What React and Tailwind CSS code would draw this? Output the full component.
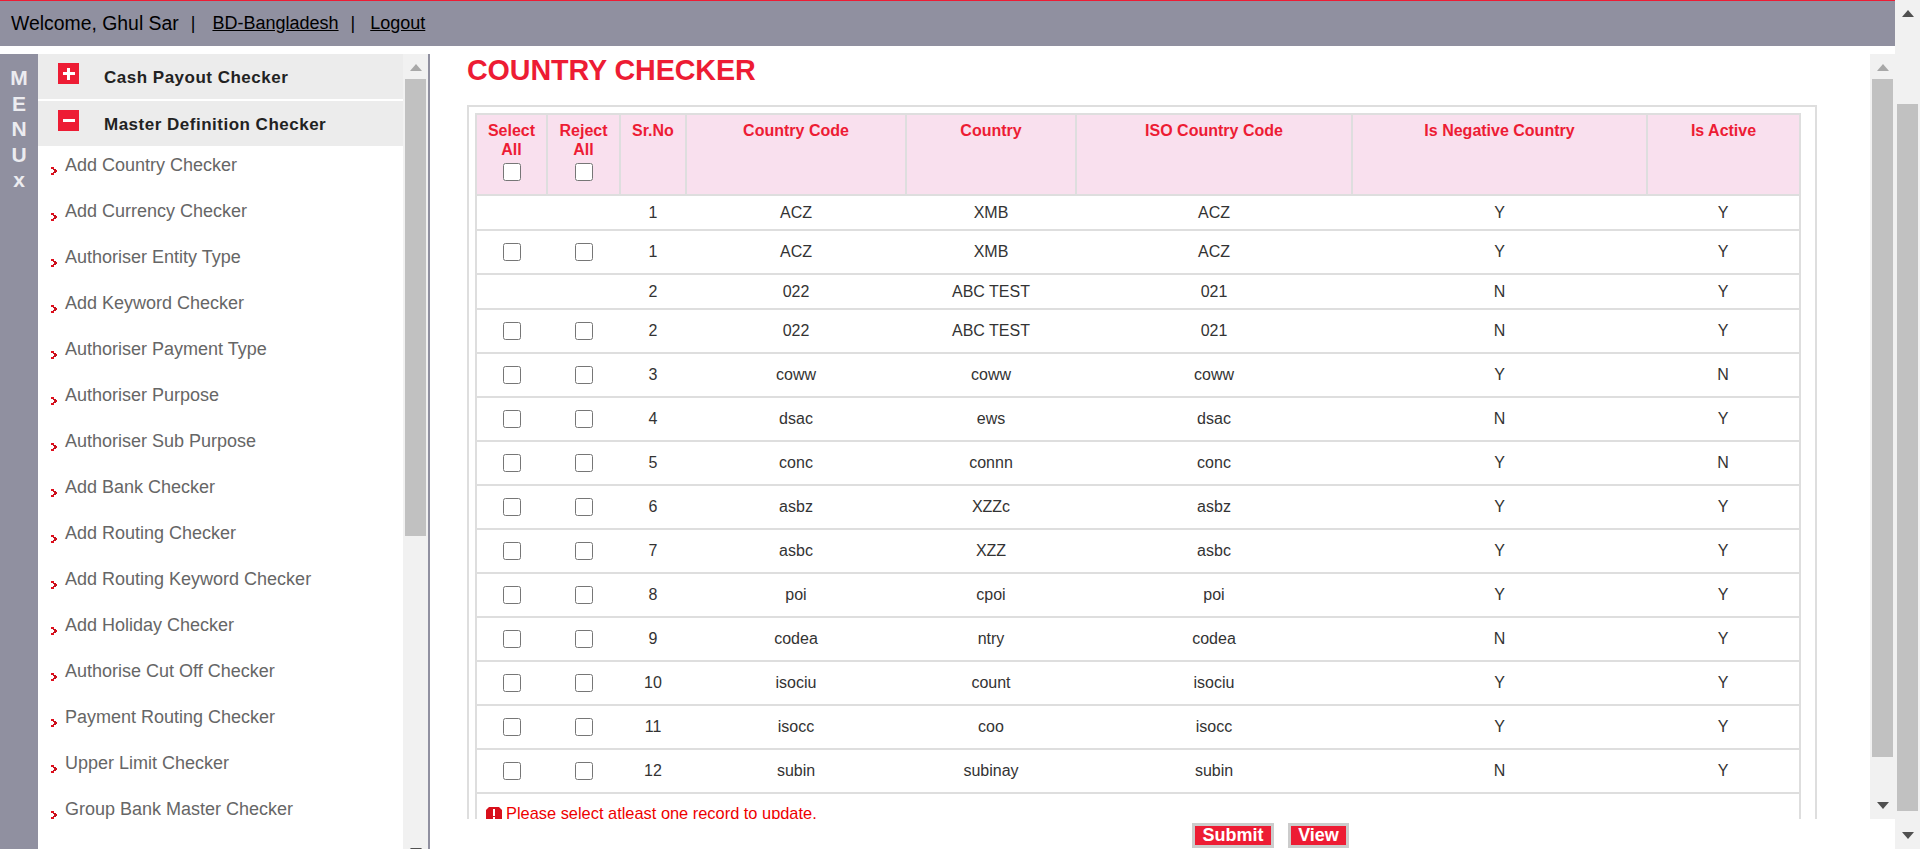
import React from "react";

const menuItems = [
  "Add Country Checker",
  "Add Currency Checker",
  "Authoriser Entity Type",
  "Add Keyword Checker",
  "Authoriser Payment Type",
  "Authoriser Purpose",
  "Authoriser Sub Purpose",
  "Add Bank Checker",
  "Add Routing Checker",
  "Add Routing Keyword Checker",
  "Add Holiday Checker",
  "Authorise Cut Off Checker",
  "Payment Routing Checker",
  "Upper Limit Checker",
  "Group Bank Master Checker",
];

const rows = [
  { sr: 1, code: "ACZ", country: "XMB", iso: "ACZ", neg: "Y", active: "Y", plain: true },
  { sr: 1, code: "ACZ", country: "XMB", iso: "ACZ", neg: "Y", active: "Y" },
  { sr: 2, code: "022", country: "ABC TEST", iso: "021", neg: "N", active: "Y", plain: true },
  { sr: 2, code: "022", country: "ABC TEST", iso: "021", neg: "N", active: "Y" },
  { sr: 3, code: "coww", country: "coww", iso: "coww", neg: "Y", active: "N" },
  { sr: 4, code: "dsac", country: "ews", iso: "dsac", neg: "N", active: "Y" },
  { sr: 5, code: "conc", country: "connn", iso: "conc", neg: "Y", active: "N" },
  { sr: 6, code: "asbz", country: "XZZc", iso: "asbz", neg: "Y", active: "Y" },
  { sr: 7, code: "asbc", country: "XZZ", iso: "asbc", neg: "Y", active: "Y" },
  { sr: 8, code: "poi", country: "cpoi", iso: "poi", neg: "Y", active: "Y" },
  { sr: 9, code: "codea", country: "ntry", iso: "codea", neg: "N", active: "Y" },
  { sr: 10, code: "isociu", country: "count", iso: "isociu", neg: "Y", active: "Y" },
  { sr: 11, code: "isocc", country: "coo", iso: "isocc", neg: "Y", active: "Y" },
  { sr: 12, code: "subin", country: "subinay", iso: "subin", neg: "N", active: "Y" },
];

const Arrow = ({ down, color }) => (
  <svg width="12" height="7" viewBox="0 0 12 7" className="block">
    <path d={down ? "M0 0h12L6 7z" : "M0 7h12L6 0z"} fill={color} />
  </svg>
);

const Bullet = () => (
  <svg width="6" height="8" viewBox="0 0 6 8" className="shrink-0 mt-[14px]" shapeRendering="crispEdges">
    <path d="M0 0h3v2H0zM0 6h3v2H0z" fill="#e0101e" />
    <path d="M2 2h3v1H2zM2 5h3v1H2z" fill="#c00f1a" />
    <path d="M3 3h3v2H3z" fill="#d0101c" />
  </svg>
);

const Toggle = ({ minus }) => (
  <div className="w-[21px] h-[21px] bg-[#ed1c34] flex items-center justify-center shrink-0 relative">
    <div className="w-[12px] h-[3px] bg-white" />
    {!minus && <div className="absolute w-[3px] h-[12px] bg-white" />}
  </div>
);

const Scrollbar = ({ thumbTop, thumbHeight, upColor, className }) => (
  <div className={`bg-[#f1f1f1] flex flex-col items-center relative ${className}`}>
    <div className="absolute top-[10px]">
      <Arrow color={upColor} />
    </div>
    <div
      className="absolute left-[2px] right-[2px] bg-[#c1c1c1]"
      style={{ top: thumbTop, height: thumbHeight }}
    />
    <div className="absolute bottom-[10px]">
      <Arrow down color="#505050" />
    </div>
  </div>
);

const Check = () => <input type="checkbox" className="block w-[18px] h-[18px] mx-auto" readOnly />;

const Sidebar = () => (
  <aside className="w-[430px] shrink-0 flex border-r-2 border-[#9090a0] overflow-hidden">
    <div className="w-[38px] shrink-0 bg-[#9090a0] flex flex-col items-center pt-[11px] font-bold text-[21px] leading-[25.5px] text-[#ececf0]">
      <span>M</span>
      <span>E</span>
      <span>N</span>
      <span>U</span>
      <span>x</span>
    </div>
    <div className="w-[365px] shrink-0 overflow-hidden">
      <div className="h-[45px] bg-[#ececec] mb-[2px] flex pl-[20px] pt-[9px]">
        <Toggle />
        <span className="ml-[25px] mt-[2px] font-bold text-[17px] tracking-[0.5px] leading-[26px] text-[#222]">
          Cash Payout Checker
        </span>
      </div>
      <div className="h-[45px] bg-[#ececec] flex pl-[20px] pt-[9px]">
        <Toggle minus />
        <span className="ml-[25px] mt-[2px] font-bold text-[17px] tracking-[0.5px] leading-[26px] text-[#222]">
          Master Definition Checker
        </span>
      </div>
      <ul>
        {menuItems.map((item) => (
          <li key={item} className="h-[46px] flex pl-[13px] pt-[7px] gap-[8px] text-[18px] leading-[26px] text-[#666]">
            <Bullet />
            <span className="-mt-[1px]">{item}</span>
          </li>
        ))}
      </ul>
    </div>
    <Scrollbar thumbTop={25} thumbHeight={457} upColor="#a8a8a8" className="w-[25px] h-[811px] shrink-0" />
  </aside>
);

const headers = [
  { label: "Select All", check: true, width: "w-[71px]" },
  { label: "Reject All", check: true, width: "w-[73px]" },
  { label: "Sr.No", width: "w-[66px]" },
  { label: "Country Code", width: "w-[220px]" },
  { label: "Country", width: "w-[170px]" },
  { label: "ISO Country Code", width: "w-[276px]" },
  { label: "Is Negative Country", width: "w-[295px]" },
  { label: "Is Active", width: "w-[153px]" },
];

const CountryTable = () => (
  <table className="table-fixed border-collapse w-[1324px] text-center text-[16px] text-[#333]">
    <thead>
      <tr>
        {headers.map((h) => (
          <th
            key={h.label}
            className={`${h.width} h-[81px] align-top bg-[#f9e0ee] border-2 border-[#dedede] pt-[6px] px-[8px] font-bold text-[#ed1c34] leading-[19px]`}
          >
            <div>{h.label}</div>
            {h.check && (
              <div className="mt-[4px] leading-[18px]">
                <Check />
              </div>
            )}
          </th>
        ))}
      </tr>
    </thead>
    <tbody>
      {rows.map((r, i) => (
        <tr key={i} className={r.plain ? "h-[35px]" : "h-[44px]"}>
          <td className="border-y-2 border-l-2 border-[#dedede]">{!r.plain && <Check />}</td>
          <td className="border-y-2 border-[#dedede]">{!r.plain && <Check />}</td>
          <td className="border-y-2 border-[#dedede]">{r.sr}</td>
          <td className="border-y-2 border-[#dedede]">{r.code}</td>
          <td className="border-y-2 border-[#dedede]">{r.country}</td>
          <td className="border-y-2 border-[#dedede]">{r.iso}</td>
          <td className="border-y-2 border-[#dedede]">{r.neg}</td>
          <td className="border-y-2 border-r-2 border-[#dedede]">{r.active}</td>
        </tr>
      ))}
      <tr>
        <td colSpan={8} className="border-x-2 border-t-2 border-[#dedede] h-[60px] align-top text-left pl-[9px] pt-[9px]">
          <div className="flex items-start gap-[4px] text-[16.4px] text-[#ee0000] leading-[20px]">
            <svg width="16" height="16" viewBox="0 0 16 16" className="mt-[3px] shrink-0">
              <path d="M3 1h10l3 3v9l-3 3H3l-3-3V4z" fill="#d8101c" />
              <path d="M7 3h2v7H7zM7 11h2v2H7z" fill="#fff" />
            </svg>
            <span>Please select atleast one record to update.</span>
          </div>
        </td>
      </tr>
    </tbody>
  </table>
);

const App = () => (
  <div className="h-screen flex overflow-hidden bg-white font-['Liberation_Sans',Arial,sans-serif]">
    <div className="flex-1 min-w-0 flex flex-col">
      <header className="h-[46px] shrink-0 bg-[#9090a0] border-t border-[#ed1c34] flex items-center pl-[11px] text-[18px] text-black">
        <span className="text-[19.4px]">Welcome, Ghul Sar</span>
        <span className="ml-[12px]">|</span>
        <a className="ml-[17px] underline">BD-Bangladesh</a>
        <span className="ml-[12px]">|</span>
        <a className="ml-[15px] underline">Logout</a>
      </header>
      <div className="flex-1 min-h-0 flex mt-[8px]">
        <Sidebar />
        <main className="flex-1 min-w-0 flex flex-col">
          <div className="h-[765px] shrink-0 flex overflow-hidden">
            <div className="flex-1 min-w-0 pl-[37px] overflow-hidden">
              <h1 className="text-[28.7px] font-bold leading-[32px] text-[#ed1c34] tracking-[-0.1px]">COUNTRY CHECKER</h1>
              <div className="w-[1350px] mt-[19px] border-2 border-b-0 border-[#dedede] pl-[6px] pt-[6px]">
                <CountryTable />
              </div>
            </div>
            <Scrollbar thumbTop={25} thumbHeight={678} upColor="#a8a8a8" className="w-[25px] shrink-0" />
          </div>
          <div className="flex-1 flex items-start justify-start pl-[762px] pt-[4px] gap-[14px]">
            <button className="w-[82px] h-[25px] bg-[#ed1c34] border-[3px] border-[#cccccc] text-white font-bold text-[18px] leading-[19px]">
              Submit
            </button>
            <button className="w-[61px] h-[25px] bg-[#ed1c34] border-[3px] border-[#cccccc] text-white font-bold text-[18px] leading-[19px]">
              View
            </button>
          </div>
        </main>
      </div>
    </div>
    <Scrollbar thumbTop={104} thumbHeight={707} upColor="#505050" className="w-[25px] shrink-0" />
  </div>
);

export default App;
